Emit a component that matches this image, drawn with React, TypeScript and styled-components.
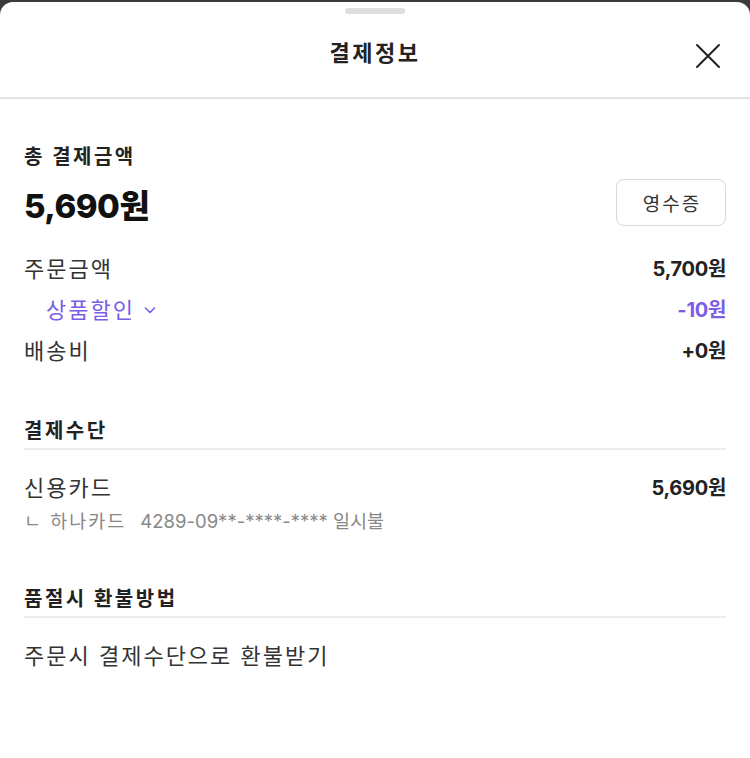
import React from "react";
import styled, { createGlobalStyle } from "styled-components";

const GlobalStyle = createGlobalStyle`
  html, body {
    margin: 0;
    padding: 0;
    background: #3b3b3b;
  }
  body {
    font-family: Inter, "Noto Sans CJK KR", sans-serif;
    color: #222;
  }
`;

type PriceRowType = {
  label: string;
  value: string;
  accent?: boolean;
  dropdown?: boolean;
};

const priceRows: PriceRowType[] = [
  { label: "주문금액", value: "5,700원" },
  { label: "상품할인", value: "-10원", accent: true, dropdown: true },
  { label: "배송비", value: "+0원" },
];

const ChevronDown = ({ color }: { color: string }) => (
  <svg width="14" height="14" viewBox="0 0 14 14" fill="none">
    <path d="M2.5 5l4.5 4.5L11.5 5" stroke={color} strokeWidth="1.6" strokeLinecap="round" strokeLinejoin="round" />
  </svg>
);

const CloseIcon = () => (
  <svg width="26" height="26" viewBox="0 0 26 26" fill="none">
    <path d="M2 2l22 22M24 2L2 24" stroke="#222" strokeWidth="2" strokeLinecap="round" />
  </svg>
);

export default function App() {
  return (
    <>
      <GlobalStyle />
      <Sheet>
        <Handle />
        <Header>
          <span />
          <Title>결제정보</Title>
          <CloseButton aria-label="닫기">
            <CloseIcon />
          </CloseButton>
        </Header>
        <Content>
          <TotalSection>
            <SectionLabel>총 결제금액</SectionLabel>
            <TotalRow>
              <TotalAmount>5,690원</TotalAmount>
              <ReceiptButton>영수증</ReceiptButton>
            </TotalRow>
            <PriceList>
              {priceRows.map(row => (
                <PriceRow key={row.label}>
                  <RowLabel accent={row.accent}>
                    {row.label}
                    {row.dropdown && <ChevronDown color="#7b5de6" />}
                  </RowLabel>
                  <RowValue accent={row.accent}>{row.value}</RowValue>
                </PriceRow>
              ))}
            </PriceList>
          </TotalSection>

          <Section>
            <SectionTitle>결제수단</SectionTitle>
            <SectionBody>
              <PriceRow>
                <RowLabel>신용카드</RowLabel>
                <RowValue>5,690원</RowValue>
              </PriceRow>
              <CardDetail>
                <CardName>ㄴ 하나카드</CardName>
                <span>4289-09**-****-**** 일시불</span>
              </CardDetail>
            </SectionBody>
          </Section>

          <Section>
            <SectionTitle>품절시 환불방법</SectionTitle>
            <SectionBody>
              <RowLabel>주문시 결제수단으로 환불받기</RowLabel>
            </SectionBody>
          </Section>
        </Content>
      </Sheet>
    </>
  );
}

const Sheet = styled.div`
  margin-top: 2px;
  min-height: calc(100vh - 2px);
  background: #fff;
  border-radius: 13px 13px 0 0;
  display: flex;
  flex-direction: column;
`;

const Handle = styled.div`
  width: 60px;
  height: 6px;
  border-radius: 3px;
  background: #dedede;
  margin: 6px auto 0;
`;

const Header = styled.div`
  display: grid;
  grid-template-columns: 1fr auto 1fr;
  align-items: center;
  height: 77px;
  padding: 0 27px 6px;
  border-bottom: 2px solid #e3e3e3;
`;

const Title = styled.h1`
  margin: 0;
  font-size: 22px;
  font-weight: 700;
  line-height: 28px;
  letter-spacing: 2.5px;
  color: #222;
`;

const CloseButton = styled.button`
  justify-self: end;
  display: flex;
  align-items: center;
  justify-content: center;
  width: 30px;
  height: 30px;
  margin-top: 6px;
  padding: 0;
  border: none;
  background: none;
`;

const Content = styled.div`
  padding: 0 24px 40px;
  display: flex;
  flex-direction: column;
`;

const TotalSection = styled.section`
  padding-top: 46px;
`;

const SectionLabel = styled.div`
  font-size: 20px;
  font-weight: 700;
  line-height: 24px;
  letter-spacing: 2.5px;
  color: #222;
`;

const TotalRow = styled.div`
  display: flex;
  justify-content: space-between;
  align-items: flex-end;
  margin-top: 10px;
`;

const TotalAmount = styled.div`
  font-size: 33px;
  font-weight: 800;
  line-height: 40px;
  letter-spacing: -0.5px;
  color: #111;
`;

const ReceiptButton = styled.button`
  width: 110px;
  height: 47px;
  border: 1px solid #d9d9d9;
  border-radius: 8px;
  background: #fff;
  font-family: inherit;
  font-size: 19px;
  letter-spacing: 2px;
  color: #333;
  padding: 0 0 0 2px;
`;

const PriceList = styled.div`
  display: flex;
  flex-direction: column;
  gap: 13px;
  margin-top: 29px;
`;

const PriceRow = styled.div`
  display: flex;
  justify-content: space-between;
  align-items: center;
`;

const RowLabel = styled.div<{ accent?: boolean }>`
  display: flex;
  align-items: center;
  gap: 8px;
  font-size: 22px;
  line-height: 28px;
  letter-spacing: 2px;
  color: ${props => (props.accent ? "#7b5de6" : "#333")};
  padding-left: ${props => (props.accent ? "22px" : "0")};
`;

const RowValue = styled.div<{ accent?: boolean }>`
  font-size: 20px;
  font-weight: 700;
  line-height: 28px;
  letter-spacing: -0.3px;
  color: ${props => (props.accent ? "#7b5de6" : "#222")};
`;

const Section = styled.section`
  margin-top: 54px;
`;

const SectionTitle = styled.div`
  font-size: 20px;
  font-weight: 700;
  line-height: 24px;
  letter-spacing: 2.5px;
  color: #222;
  padding-bottom: 5px;
  border-bottom: 2px solid #ececec;
`;

const SectionBody = styled.div`
  display: flex;
  flex-direction: column;
  gap: 7px;
  padding-top: 24px;
`;

const CardDetail = styled.div`
  display: flex;
  gap: 14px;
  font-size: 18.5px;
  line-height: 24px;
  color: #888;
`;

const CardName = styled.span`
  letter-spacing: 2px;
`;
